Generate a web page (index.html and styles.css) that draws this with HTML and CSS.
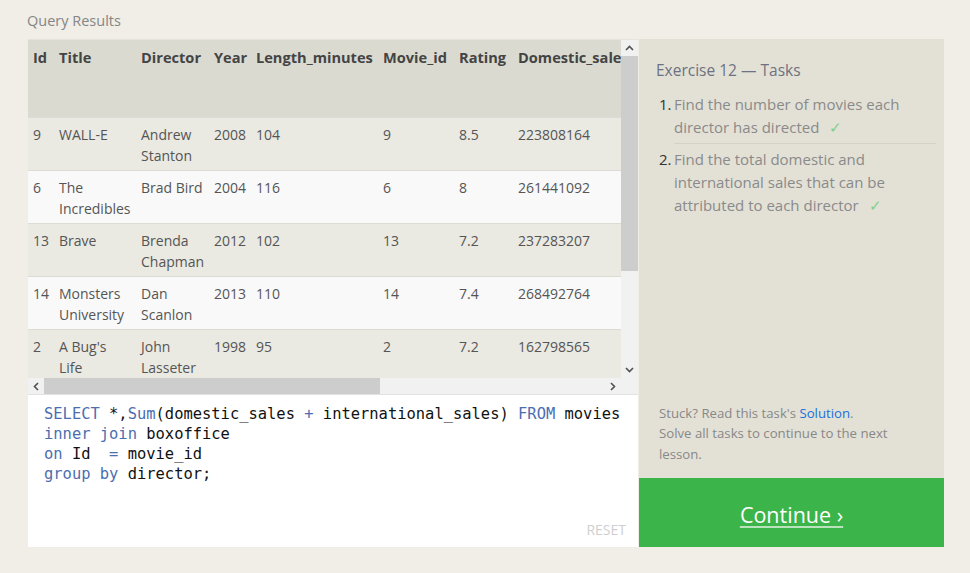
FILE: index.html
```html
<!DOCTYPE html>
<html>
<head>
<meta charset="utf-8">
<link rel="stylesheet" href="styles.css">
</head>
<body>
<div class="page">
  <div class="title">Query Results</div>
  <div class="main">
    <div class="left">
      <div class="results">
        <div class="viewport">
          <table class="grid">
            <colgroup>
              <col class="c-id"><col class="c-title"><col class="c-dir"><col class="c-year"><col class="c-len"><col class="c-mid"><col class="c-rat"><col class="c-dom"><col class="c-int"><col class="c-sum">
            </colgroup>
            <thead>
              <tr class="head">
                <th>Id</th><th>Title</th><th>Director</th><th>Year</th><th>Length_minutes</th><th>Movie_id</th><th>Rating</th><th>Domestic_sales</th><th>International_sales</th><th>Sum(domestic_sales + international_sales)</th>
              </tr>
            </thead>
            <tbody>
              <tr><td>9</td><td>WALL-E</td><td>Andrew Stanton</td><td>2008</td><td>104</td><td>9</td><td>8.5</td><td>223808164</td><td>297503696</td><td>521311860</td></tr>
              <tr><td>6</td><td>The Incredibles</td><td>Brad Bird</td><td>2004</td><td>116</td><td>6</td><td>8</td><td>261441092</td><td>370001000</td><td>631442092</td></tr>
              <tr><td>13</td><td>Brave</td><td>Brenda Chapman</td><td>2012</td><td>102</td><td>13</td><td>7.2</td><td>237283207</td><td>301700000</td><td>538983207</td></tr>
              <tr><td>14</td><td>Monsters University</td><td>Dan Scanlon</td><td>2013</td><td>110</td><td>14</td><td>7.4</td><td>268492764</td><td>475066843</td><td>743559607</td></tr>
              <tr><td>2</td><td>A Bug's Life</td><td>John Lasseter</td><td>1998</td><td>95</td><td>2</td><td>7.2</td><td>162798565</td><td>200600000</td><td>363398565</td></tr>
              <tr><td>11</td><td>Toy Story 3</td><td>Lee Unkrich</td><td>2010</td><td>103</td><td>11</td><td>8.3</td><td>415004880</td><td>648167031</td><td>1063171911</td></tr>
              <tr><td>10</td><td>Up</td><td>Pete Docter</td><td>2009</td><td>101</td><td>10</td><td>8.3</td><td>293004164</td><td>438338580</td><td>731342744</td></tr>
            </tbody>
          </table>
        </div>
        <div class="vbar">
          <div class="sb-btn"><svg width="9" height="6" viewBox="0 0 9 6"><polyline points="1,5 4.5,1.5 8,5" fill="none" stroke="#505050" stroke-width="1.6"/></svg></div>
          <div class="vtrack"><div class="vthumb"></div></div>
          <div class="sb-btn"><svg width="9" height="6" viewBox="0 0 9 6"><polyline points="1,1 4.5,4.5 8,1" fill="none" stroke="#505050" stroke-width="1.6"/></svg></div>
        </div>
        <div class="hbar">
          <div class="sb-btn"><svg width="6" height="9" viewBox="0 0 6 9"><polyline points="5,1 1.5,4.5 5,8" fill="none" stroke="#505050" stroke-width="1.6"/></svg></div>
          <div class="htrack"><div class="hthumb"></div></div>
          <div class="sb-btn"><svg width="6" height="9" viewBox="0 0 6 9"><polyline points="1,1 4.5,4.5 1,8" fill="none" stroke="#505050" stroke-width="1.6"/></svg></div>
        </div>
        <div class="corner"></div>
      </div>
      <div class="editor">
<pre class="code"><span class="kw">SELECT</span> *,<span class="kw">Sum</span>(domestic_sales <span class="kw">+</span> international_sales) <span class="kw">FROM</span> movies
<span class="kw">inner</span> <span class="kw">join</span> boxoffice
<span class="kw">on</span> Id  <span class="kw">=</span> movie_id
<span class="kw">group</span> <span class="kw">by</span> director;</pre>
        <div class="reset">RESET</div>
      </div>
    </div>
    <div class="right">
      <div class="tasks">
        <h2 class="ex-title">Exercise 12 — Tasks</h2>
        <ol class="task-list">
          <li class="task"><span class="num">1.</span><span class="txt">Find the number of movies each director has directed <span class="check">✓</span></span></li>
          <li class="task"><span class="num">2.</span><span class="txt">Find the total domestic and international sales that can be attributed to each director <span class="check">✓</span></span></li>
        </ol>
        <div class="stuck">Stuck? Read this task's <a class="sol">Solution</a>.<br>Solve all tasks to continue to the next lesson.</div>
      </div>
      <div class="continue"><a class="cont-link">Continue ›</a></div>
    </div>
  </div>
</div>
</body>
</html>
```
FILE: styles.css
```css
* { box-sizing: border-box; }
html, body { margin: 0; padding: 0; }
body {
  background: #f0eee7;
  font-family: "Open Sans", "Noto Sans", sans-serif;
  width: 970px;
  height: 573px;
  overflow: hidden;
}
.page {
  padding: 11px 26px 0 28px;
}
.title {
  font-size: 14.5px;
  line-height: 20px;
  color: #858585;
  margin: 0 0 8px -1px;
}
.main {
  display: flex;
  width: 916px;
  height: 508px;
}
.left {
  width: 611px;
  display: flex;
  flex-direction: column;
}
.results {
  display: grid;
  grid-template-columns: 593px 17px;
  grid-template-rows: 338px 16px;
  border-top: 1px solid #e4e3dc;
  background: #f0f0f0;
  width: 610px;
}
.viewport {
  overflow: hidden;
  background: #f9f9f9;
}
.grid {
  border-collapse: collapse;
  table-layout: fixed;
  width: 1000px;
  font-size: 14px;
  color: #555;
}
.c-id { width: 26px; }
.c-title { width: 82px; }
.c-dir { width: 73px; }
.c-year { width: 42px; }
.c-len { width: 127px; }
.c-mid { width: 76px; }
.c-rat { width: 59px; }
.c-dom { width: 115px; }
.c-int { width: 140px; }
.c-sum { width: 260px; }
.grid th, .grid td {
  text-align: left;
  vertical-align: top;
  padding: 6px 4px 4px 5px;
  line-height: 21px;
  overflow: hidden;
}
.grid th {
  font-weight: 700;
  font-size: 14.6px;
  color: #444;
  white-space: nowrap;
  padding-top: 7px;
}
.grid th:last-child { white-space: normal; }
.head {
  background: #dbdad0;
  height: 77px;
}
.grid tbody tr {
  height: 53px;
  border-top: 1px solid #dcdbd4;
}
.grid tbody tr:nth-child(odd) { background: #eae9e2; }
.grid tbody tr:nth-child(even) { background: #f9f9f9; }
.vbar {
  display: flex;
  flex-direction: column;
  background: #f1f1f1;
}
.sb-btn {
  flex: 0 0 16px;
  display: flex;
  align-items: center;
  justify-content: center;
  background: #f1f1f1;
}
.vtrack {
  flex: 1;
  display: flex;
  flex-direction: column;
}
.vthumb {
  height: 215px;
  background: #cdcdcd;
}
.hbar {
  display: flex;
  background: #f1f1f1;
}
.htrack {
  flex: 1;
  display: flex;
}
.hthumb {
  width: 336px;
  background: #cdcdcd;
}
.corner { background: #f1f1f1; }
.editor {
  flex: 1;
  background: #fff;
  border-top: 1px solid #e2e2e2;
  display: flex;
  flex-direction: column;
  width: 610px;
}
.code {
  margin: 0;
  padding: 9px 16px 0 16px;
  font-family: "DejaVu Sans Mono", "Liberation Mono", monospace;
  font-size: 15.45px;
  line-height: 20px;
  color: #111;
  flex: 1;
}
.kw { color: #4c6eb0; }
.reset {
  align-self: flex-end;
  font-size: 14px;
  line-height: 18px;
  color: #cfcfcf;
  padding: 0 12px 8px 0;
}
.right {
  width: 305px;
  display: flex;
  flex-direction: column;
}
.tasks {
  flex: 1;
  background: #e3e1d6;
  padding: 20px 8px 14px 17px;
  display: flex;
  flex-direction: column;
}
.ex-title {
  margin: 0 0 12px 0;
  font-weight: 400;
  font-size: 15.5px;
  line-height: 22px;
  color: #6d7181;
}
.task-list {
  list-style: none;
  margin: 0;
  padding: 0;
}
.task {
  display: flex;
  font-size: 15px;
  line-height: 23px;
  color: #8a8a8a;
  padding: 0 0 4px 0;
}
.task + .task {
  padding-top: 4px;
}
.task:first-child .txt {
  border-bottom: 1px solid #d4d2c8;
  padding-bottom: 4px;
}
.task:first-child { padding-bottom: 0; }
.num {
  width: 15px;
  margin-left: 3px;
  color: #333;
}
.txt { flex: 1; }
.check {
  color: #7fcf86;
  margin-left: 6px;
}
.stuck {
  margin-top: auto;
  padding-left: 3px;
  max-width: 250px;
  font-size: 13.2px;
  line-height: 20.5px;
  color: #888;
}
.sol { color: #1a6fdc; }
.continue {
  height: 69px;
  background: #3bb54a;
  display: flex;
  align-items: center;
  justify-content: center;
}
.cont-link {
  color: #fff;
  font-size: 21.5px;
  text-decoration: underline;
  text-underline-offset: 3px;
  text-decoration-color: #b9e2bd;
  padding-top: 3px;
}
```
